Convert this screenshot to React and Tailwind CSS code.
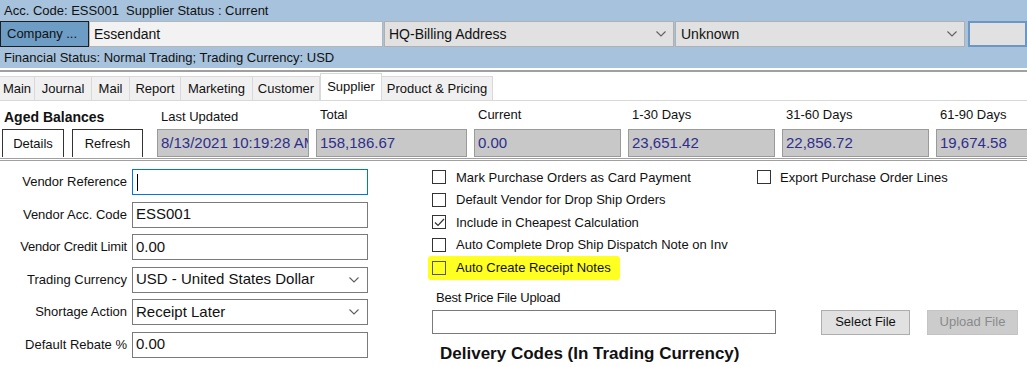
import React from 'react';

function Chevron({ className = '' }) {
  return (
    <svg className={className} width="10" height="6" viewBox="0 0 10 6" fill="none">
      <path d="M0.5 0.5 5 5 9.5 0.5" stroke="#5f5f5f" strokeWidth="1.1" />
    </svg>
  );
}

function Check({ checked }) {
  return (
    <span className="w-[14px] h-[14px] border border-[#333] bg-white flex items-center justify-center shrink-0">
      {checked && (
        <svg width="11" height="9" viewBox="0 0 11 9" fill="none">
          <path d="M1 4.5 4 7.5 10 1" stroke="#333" strokeWidth="1.2" />
        </svg>
      )}
    </span>
  );
}

const tabs = ['Main', 'Journal', 'Mail', 'Report', 'Marketing', 'Customer', 'Supplier', 'Product & Pricing'];
const tabWidths = ['w-[35px]', 'w-[57px]', 'w-[38px]', 'w-[51px]', 'w-[72px]', 'w-[67px]', 'w-[62px]', 'w-[111px]'];

const balances = [
  { label: 'Last Updated', value: '8/13/2021 10:19:28 AM', w: 'w-[152px]', lift: false },
  { label: 'Total', value: '158,186.67', w: 'w-[151px]', lift: true },
  { label: 'Current', value: '0.00', w: 'w-[147px]', lift: true },
  { label: '1-30 Days', value: '23,651.42', w: 'w-[147px]', lift: true },
  { label: '31-60 Days', value: '22,856.72', w: 'w-[147px]', lift: true },
  { label: '61-90 Days', value: '19,674.58', w: 'w-[147px]', lift: true },
];

export default function App() {
  return (
    <div className="w-[1027px] h-[367px] overflow-hidden bg-white font-['Liberation_Sans',Arial,sans-serif] text-[13px] text-[#111]">
      {/* header */}
      <div className="bg-[#a6c2dc]">
        <div className="h-[21px] pl-[4px] flex items-center">Acc. Code: ESS001&nbsp; Supplier Status : Current</div>
        <div className="h-[26px] flex items-stretch">
          <div className="w-[89px] bg-[#6d9cc5] border border-[#1e1e1e] flex items-center pl-[6px]">Company ...</div>
          <div className="w-[294px] bg-[#f2f2f2] border border-[#b5b5b5] flex items-center pl-[4px] text-[14px]">Essendant</div>
          <div className="w-[290px] ml-[1px] bg-[#e1e1e1] border border-[#b0b0b0] flex items-center justify-between pl-[4px] pr-[7px] text-[14px]">
            HQ-Billing Address
            <Chevron />
          </div>
          <div className="w-[290px] ml-[1px] bg-[#e1e1e1] border border-[#b0b0b0] flex items-center justify-between pl-[5px] pr-[7px] text-[14px]">
            Unknown
            <Chevron />
          </div>
          <div className="flex-1 ml-[3px] bg-[#e1e1e1] border-2 border-[#6d97c2]"></div>
        </div>
        <div className="h-[21px] pl-[4px] flex items-center">Financial Status: Normal Trading; Trading Currency: USD</div>
      </div>
      <div className="h-[2px] bg-white"></div>
      <div className="h-[2px] bg-[#a0a0a0]"></div>

      {/* tabs */}
      <div className="h-[29px] flex items-end border-b border-[#d9d9d9]">
        {tabs.map((t, i) => (
          <div
            key={t}
            className={
              t === 'Supplier'
                ? `${tabWidths[i]} h-[27px] bg-white border border-b-0 border-[#d9d9d9] flex items-center justify-center`
                : `${tabWidths[i]} h-[24px] bg-[#f0f0f0] border border-l-0 border-b-0 border-[#d9d9d9] flex items-center justify-center`
            }
          >
            {t}
          </div>
        ))}
      </div>

      {/* aged balances */}
      <div className="flex gap-[7px] pt-[5px] border-b-[3px] border-double border-[#a0a0a0]">
        <div className="w-[150px] shrink-0 flex flex-col">
          <div className="h-[22px] pl-[4px] flex items-center font-bold text-[14px]">Aged Balances</div>
          <div className="h-[28px] mt-[1px] flex gap-[8px] pl-[2px]">
            <div className="w-[62px] border border-b-0 border-[#333] flex items-center justify-center">Details</div>
            <div className="w-[71px] border border-b-0 border-[#333] flex items-center justify-center">Refresh</div>
          </div>
        </div>
        {balances.map((b) => (
          <div key={b.label} className={`${b.w} shrink-0 flex flex-col`}>
            <div className={b.lift ? 'h-[22px] pl-[4px] pb-[5px] flex items-center' : 'h-[22px] pl-[4px] flex items-center'}>{b.label}</div>
            <div className="h-[28px] mt-[1px] mb-[1px] bg-[#c8c8c8] border border-[#9a9a9a] flex items-center pl-[3px] text-[15px] text-[#2e2e8c] overflow-hidden whitespace-nowrap">
              {b.value}
            </div>
          </div>
        ))}
      </div>

      {/* body */}
      <div className="flex pt-[8px]">
        <div className="w-[432px] shrink-0 grid grid-cols-[127px_236px] gap-x-[5px] gap-y-[6.5px] auto-rows-[26px] content-start">
          <div className="text-right self-center">Vendor Reference</div>
          <div className="border border-[#0078d7] bg-white flex items-center pl-[4px]">
            <span className="w-[1px] h-[17px] bg-black"></span>
          </div>
          <div className="text-right self-center">Vendor Acc. Code</div>
          <div className="border border-[#7a7a7a] flex items-center pl-[3px] text-[15px]">ESS001</div>
          <div className="text-right self-center tracking-[-0.2px]">Vendor Credit Limit</div>
          <div className="border border-[#7a7a7a] flex items-center pl-[3px] text-[15px]">0.00</div>
          <div className="text-right self-center">Trading Currency</div>
          <div className="border border-[#7a7a7a] flex items-center justify-between pl-[3px] pr-[8px] text-[15px]">
            USD - United States Dollar
            <Chevron />
          </div>
          <div className="text-right self-center">Shortage Action</div>
          <div className="border border-[#7a7a7a] flex items-center justify-between pl-[3px] pr-[8px] text-[15px]">
            Receipt Later
            <Chevron />
          </div>
          <div className="text-right self-center">Default Rebate %</div>
          <div className="border border-[#7a7a7a] flex items-center pl-[3px] text-[15px]">0.00</div>
        </div>

        <div className="flex-1 flex flex-col -mt-[3px]">
          <div className="flex">
            <div className="w-[325px] flex flex-col">
              {[
                ['Mark Purchase Orders as Card Payment', false],
                ['Default Vendor for Drop Ship Orders', false],
                ['Include in Cheapest Calculation', true],
                ['Auto Complete Drop Ship Dispatch Note on Inv', false],
              ].map(([label, checked]) => (
                <div key={label} className="h-[22.5px] flex items-center gap-[10px]">
                  <Check checked={checked} />
                  <span>{label}</span>
                </div>
              ))}
              <div className="h-[24px] -ml-[4px] pl-[4px] w-[192px] bg-[#ffff21] rounded-[3px] flex items-center gap-[10px]">
                <span className="w-[14px] h-[14px] border border-[#555] shrink-0"></span>
                <span>Auto Create Receipt Notes</span>
              </div>
            </div>
            <div className="h-[22.5px] flex items-center gap-[9px]">
              <Check />
              <span>Export Purchase Order Lines</span>
            </div>
          </div>

          <div className="mt-[8px] pl-[4px] text-[13px] tracking-[-0.2px]">Best Price File Upload</div>
          <div className="mt-[2px] flex items-center">
            <div className="w-[344px] h-[24px] border border-[#7a7a7a]"></div>
            <div className="ml-[45px] w-[89px] h-[25px] bg-[#e1e1e1] border border-[#adadad] flex items-center justify-center">Select File</div>
            <div className="ml-[17px] w-[91px] h-[25px] bg-[#cccccc] border border-[#c4c4c4] text-[#8a8a8a] flex items-center justify-center">Upload File</div>
          </div>
          <div className="mt-[8px] pl-[8px] font-bold text-[17px] leading-[22px]">Delivery Codes (In Trading Currency)</div>
        </div>
      </div>
    </div>
  );
}
